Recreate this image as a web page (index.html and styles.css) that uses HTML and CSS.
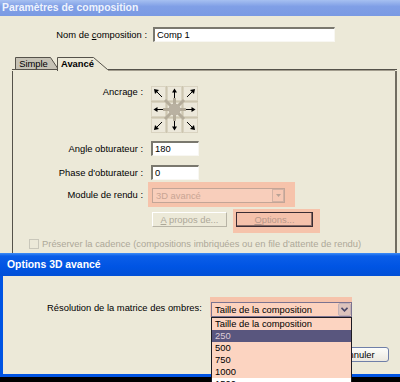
FILE: index.html
```html
<!DOCTYPE html>
<html lang="fr">
<head>
    <meta charset="UTF-8">
    <meta name="viewport" content="width=device-width, initial-scale=1.0">
    <title>Paramètres de composition</title>
    <link rel="stylesheet" href="styles.css">
</head>
<body>
<div class="desktop">
    <div class="window comp">
        <div class="titlebar inactive">Paramètres de composition</div>
        <div class="name-row">
            <span class="name-label">Nom de <u>c</u>omposition :</span>
            <div class="field name-field">Comp 1</div>
        </div>
        <div class="tabs">
            <svg class="tab-shapes" width="385" height="14" viewBox="0 0 385 14">
                <line x1="0" y1="12.5" x2="46" y2="12.5" stroke="#55524a"/>
                <line x1="95" y1="12.5" x2="385" y2="12.5" stroke="#55524a"/>
                <line x1="95" y1="13.5" x2="383" y2="13.5" stroke="#a29d8e"/>
                <polygon points="3.5,12.5 3.5,0.5 38.5,0.5 46.5,12.5" fill="#c6c2b5" stroke="#55524a"/>
                <polygon points="45.5,14 45.5,0.5 81.5,0.5 96,13 96,14" fill="#ece9d8"/>
                <polyline points="45.5,14 45.5,0.5 81.5,0.5 95.5,12.5" fill="none" stroke="#55524a"/>
            </svg>
            <span class="tab tab-simple">Simple</span>
            <span class="tab tab-adv">Avancé</span>
        </div>
        <div class="panel">
            <div class="row anchor-row">
                <span class="lbl">Ancrage :</span>
                <svg class="anchor" width="47" height="47" viewBox="0 0 47 47">
                    <rect width="47" height="47" fill="#cdc6b0"/>
                    <g fill="#ece8da" stroke="#d9d3c0">
                        <rect x="0.5" y="0.5" width="14" height="14"/>
                        <rect x="16.5" y="0.5" width="14" height="14"/>
                        <rect x="32.5" y="0.5" width="14" height="14"/>
                        <rect x="0.5" y="16.5" width="14" height="14"/>
                        <rect x="16.5" y="16.5" width="14" height="14"/>
                        <rect x="32.5" y="16.5" width="14" height="14"/>
                        <rect x="0.5" y="32.5" width="14" height="14"/>
                        <rect x="16.5" y="32.5" width="14" height="14"/>
                        <rect x="32.5" y="32.5" width="14" height="14"/>
                    </g>
                    <g stroke="#b4ac9a" stroke-width="3">
                        <line x1="23.5" y1="23.5" x2="14" y2="14"/>
                        <line x1="23.5" y1="23.5" x2="33" y2="14"/>
                        <line x1="23.5" y1="23.5" x2="14" y2="33"/>
                        <line x1="23.5" y1="23.5" x2="33" y2="33"/>
                        <line x1="23.5" y1="12" x2="23.5" y2="35"/>
                        <line x1="12" y1="23.5" x2="35" y2="23.5"/>
                    </g>
                    <circle cx="23.5" cy="23.5" r="6" fill="#b9b1a1"/>
                    <g stroke="#000" stroke-width="1">
                        <line x1="11" y1="11" x2="5" y2="5"/>
                        <line x1="23.5" y1="12" x2="23.5" y2="5"/>
                        <line x1="36" y1="11" x2="42" y2="5"/>
                        <line x1="12" y1="23.5" x2="5" y2="23.5"/>
                        <line x1="35" y1="23.5" x2="42" y2="23.5"/>
                        <line x1="11" y1="36" x2="5" y2="42"/>
                        <line x1="23.5" y1="35" x2="23.5" y2="42"/>
                        <line x1="36" y1="36" x2="42" y2="42"/>
                    </g>
                    <g fill="#000">
                        <polygon points="3,3 8,4 4,8"/>
                        <polygon points="23.5,2.5 21,6.5 26,6.5"/>
                        <polygon points="44,3 39,4 43,8"/>
                        <polygon points="2.5,23.5 6.5,21 6.5,26"/>
                        <polygon points="44.5,23.5 40.5,21 40.5,26"/>
                        <polygon points="3,44 4,39 8,43"/>
                        <polygon points="23.5,44.5 21,40.5 26,40.5"/>
                        <polygon points="44,44 39,43 43,39"/>
                    </g>
                </svg>
            </div>
            <div class="row angle-row">
                <span class="lbl">Angle obturateur :</span>
                <div class="field num">180</div>
            </div>
            <div class="row phase-row">
                <span class="lbl">Phase d'obturateur :</span>
                <div class="field num">0</div>
            </div>
            <div class="row module-row">
                <span class="lbl">Module de rendu :</span>
                <div class="hl hl-module">
                    <div class="select disabled">
                        <span>3D avancé</span>
                        <span class="drop-dis">
                            <svg width="5" height="3" viewBox="0 0 5 3"><polygon points="0,0 5,0 2.5,3" fill="#b8a296"/></svg>
                        </span>
                    </div>
                </div>
            </div>
            <div class="btn-row">
                <div class="btn btn-about"><u>A</u> propos de...</div>
                <div class="hl hl-options">
                    <div class="btn btn-options"><u>O</u>ptions...</div>
                </div>
            </div>
            <div class="check-row">
                <span class="checkbox"></span>
                <span>Préserver la cadence (compositions imbriquées ou en file d'attente de rendu)</span>
            </div>
        </div>
    </div>

    <div class="window opts">
        <div class="titlebar active">Options 3D avancé</div>
        <div class="opts-body">
            <div class="res-row">
                <span class="res-label">Résolution de la matrice des ombres:</span>
                <div class="hl hl-select">
                    <div class="select open">
                        <span>Taille de la composition</span>
                        <span class="drop-btn">
                            <svg width="7" height="5" viewBox="0 0 7 5"><polyline points="0.5,0.8 3.5,3.8 6.5,0.8" fill="none" stroke="#4a4868" stroke-width="1.6"/></svg>
                        </span>
                    </div>
                    <ul class="droplist">
                        <li>Taille de la composition</li>
                        <li class="sel">250</li>
                        <li>500</li>
                        <li>750</li>
                        <li>1000</li>
                        <li class="plain">1500</li>
                    </ul>
                </div>
            </div>
            <div class="dlg-buttons">
                <button class="xp-btn">OK</button>
                <button class="xp-btn"><u>A</u>nnuler</button>
            </div>
        </div>
    </div>
</div>
</body>
</html>
```

FILE: styles.css
```css
* {
    box-sizing: border-box;
}

body {
    margin: 0;
    width: 400px;
    height: 382px;
    overflow: hidden;
    background: #000;
    font-family: "Liberation Sans", Arial, sans-serif;
    font-size: 9.4px;
    color: #000;
}

.desktop {
    position: relative;
    width: 400px;
    height: 382px;
    overflow: hidden;
}

/* windows sit on the desktop */
.window {
    position: absolute;
    left: 0;
    background: #ece9d8;
}
.comp {
    top: 0;
    width: 400px;
    height: 262px;
}
.opts {
    top: 253px;
    width: 410px;
    height: 124px;
    padding: 0 3px 3px 3px;
    background: #0054e3;
    display: flex;
    flex-direction: column;
}

.titlebar {
    font-size: 10.4px;
    font-weight: bold;
    white-space: nowrap;
}
.titlebar.inactive {
    height: 16px;
    line-height: 15px;
    padding-left: 2px;
    color: #eef3fd;
    background: linear-gradient(#a6c0f1, #809fe6 40%, #7a9ae3);
}
.titlebar.active {
    height: 23px;
    line-height: 24px;
    margin: 0 -3px;
    padding-left: 7px;
    color: #fff;
    background: linear-gradient(#3f8ef7, #0b5ee8 3px, #0054e3 60%, #0150d6);
}

/* composition name */
.name-row {
    display: flex;
    align-items: center;
    margin-top: 11px;
}
.name-label {
    width: 148px;
    padding-right: 1px;
    text-align: right;
    white-space: nowrap;
}
.field {
    height: 15px;
    padding-left: 2px;
    line-height: 12px;
    white-space: nowrap;
    background: #fff;
    border-style: solid;
    border-width: 2px 1px 1px 2px;
    border-color: #7a786e #f8f7f2 #f8f7f2 #7a786e;
}
.name-field {
    width: 182px;
    margin-left: 5px;
}

/* tabs */
.tabs {
    position: relative;
    z-index: 1;
    display: flex;
    width: 385px;
    height: 14px;
    margin: 15px 0 0 12px;
}
.tab-shapes {
    position: absolute;
    left: 0;
    top: 0;
}
.tab {
    position: relative;
    line-height: 13px;
    text-align: center;
}
.tab-simple {
    width: 37px;
    margin-left: 3px;
}
.tab-adv {
    width: 41px;
    margin-left: 5px;
    font-weight: bold;
}

.panel {
    width: 385px;
    height: 200px;
    margin-left: 12px;
    padding-top: 15px;
    border-left: 1px solid #55524a;
    border-right: 2px solid #716d61;
}

.row {
    display: flex;
    align-items: center;
}
.lbl {
    width: 130px;
    margin-right: 5px;
    text-align: right;
    white-space: nowrap;
}
.anchor-row {
    align-items: flex-start;
}
.anchor-row .lbl {
    line-height: 12px;
}
.anchor {
    display: block;
    margin-left: 3px;
}
.angle-row {
    margin-top: 8px;
}
.phase-row {
    margin-top: 9px;
}
.module-row {
    margin-top: 2px;
}
.field.num {
    width: 48px;
    margin-left: 3px;
}

/* salmon highlight marks */
.hl {
    background: #f6c3ab;
}
.hl-module {
    padding: 6px 10px 4px 4px;
}

.select {
    display: flex;
    align-items: center;
    height: 15px;
    border: 1px solid;
    white-space: nowrap;
}
.select.disabled {
    width: 133px;
    padding-left: 3px;
    color: #c9a594;
    background: #f8cebb;
    border-color: #c2a597;
}
.drop-dis {
    display: flex;
    align-items: center;
    justify-content: center;
    width: 12px;
    height: 13px;
    margin-left: auto;
    border: 1px solid #d2b2a4;
    background: #f6c8b4;
}

.btn-row {
    display: flex;
    align-items: flex-start;
    margin-top: 2px;
    padding-left: 135px;
}
.btn {
    height: 15px;
    line-height: 13px;
    text-align: center;
    white-space: nowrap;
}
.btn-about {
    width: 75px;
    margin: 3px 0 0 4px;
    color: #aca899;
    background: #ece9d8;
    border: 1px solid;
    border-color: #fff #b8b4a6 #b8b4a6 #fff;
}
.hl-options {
    margin-left: 6px;
    padding: 3px 7px 6px 3px;
}
.btn-options {
    width: 77px;
    color: #b8998b;
    background: #f4c1ab;
    border: 1px solid #3a2c33;
    box-shadow: inset -1px -1px #866a66;
}

.check-row {
    display: flex;
    align-items: center;
    margin-top: 5px;
    padding-left: 16px;
    color: #aca899;
    white-space: nowrap;
}
.checkbox {
    width: 10px;
    height: 10px;
    margin-right: 3px;
    border: 1px solid #c9c7ba;
}

/* options dialog */
.opts-body {
    flex: 1;
    background: #ece9d8;
}
.res-row {
    display: flex;
    align-items: center;
    margin-top: 21px;
    padding-left: 44px;
}
.res-label {
    width: 163px;
    white-space: nowrap;
}
.hl-select {
    position: relative;
    width: 142px;
    padding: 5px 0 0 1px;
}
.select.open {
    width: 141px;
    padding-left: 3px;
    background: #fcd2be;
    border-color: #7b7390;
}
.drop-btn {
    display: flex;
    align-items: center;
    justify-content: center;
    width: 13px;
    height: 13px;
    margin-left: auto;
    border: 1px solid #c4b2b6;
    border-radius: 2px;
    background: #dcc3bc;
}
.droplist {
    position: absolute;
    left: 1px;
    top: 100%;
    width: 141px;
    margin: 0;
    padding: 0;
    list-style: none;
    border: 1px solid #1c1a22;
    z-index: 2;
}
.droplist li {
    height: 12px;
    padding-left: 3px;
    line-height: 12px;
    background: #fcd4c1;
}
.droplist li.sel {
    color: #dccbd6;
    background: #59567e;
}
.droplist li.plain {
    background: #fff;
}

.dlg-buttons {
    display: flex;
    gap: 5px;
    margin-top: 30px;
    padding-left: 251px;
}
.xp-btn {
    width: 65px;
    height: 15px;
    padding: 0 0 0 4px;
    font: inherit;
    line-height: 13px;
    color: #000;
    border: 1px solid #6f7fa8;
    border-radius: 3px;
    background: linear-gradient(#fdfdfb, #ece9e0);
}
```
